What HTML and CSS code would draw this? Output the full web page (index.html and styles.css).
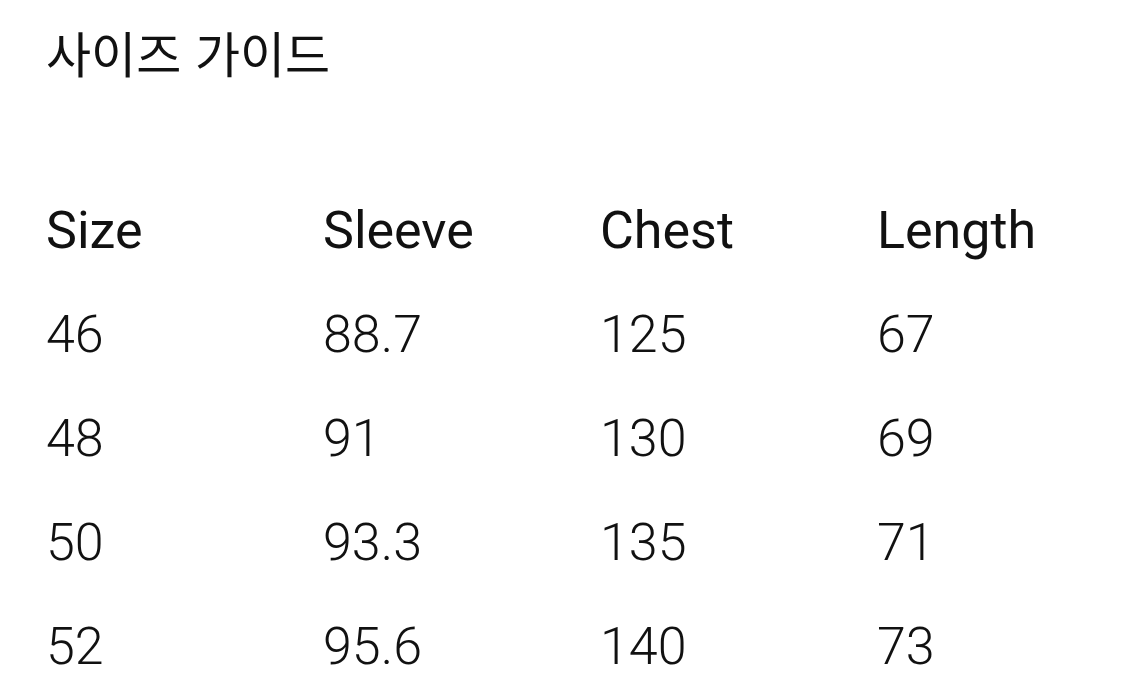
FILE: index.html
```html
<!DOCTYPE html>
<html lang="ko">
<head>
<meta charset="utf-8">
<link rel="stylesheet" href="styles.css">
</head>
<body>
<main class="guide">
  <h1 class="title">사이즈 가이드</h1>
  <div class="table">
    <div class="cell head">Size</div>
    <div class="cell head">Sleeve</div>
    <div class="cell head">Chest</div>
    <div class="cell head">Length</div>

    <div class="cell">46</div>
    <div class="cell">88.7</div>
    <div class="cell">125</div>
    <div class="cell">67</div>

    <div class="cell">48</div>
    <div class="cell">91</div>
    <div class="cell">130</div>
    <div class="cell">69</div>

    <div class="cell">50</div>
    <div class="cell">93.3</div>
    <div class="cell">135</div>
    <div class="cell">71</div>

    <div class="cell">52</div>
    <div class="cell">95.6</div>
    <div class="cell">140</div>
    <div class="cell">73</div>
  </div>
</main>
</body>
</html>
```
FILE: styles.css
```css
html, body {
  margin: 0;
  padding: 0;
  background: #ffffff;
  color: #111111;
}
.guide {
  padding: 19px 0 0 46px;
}
.title {
  margin: 0;
  font-family: "Noto Sans CJK KR", "Noto Sans", sans-serif;
  font-weight: 400;
  font-size: 49px;
  line-height: 66px;
  color: #111111;
}
.table {
  margin-top: 94px;
  display: grid;
  grid-template-columns: repeat(4, 277px);
  grid-auto-rows: 104px;
}
.cell {
  font-family: Roboto, "Liberation Sans", sans-serif;
  font-weight: 300;
  font-size: 52px;
  line-height: 104px;
  color: #111111;
  white-space: nowrap;
}
.cell.head {
  font-weight: 400;
}
```
